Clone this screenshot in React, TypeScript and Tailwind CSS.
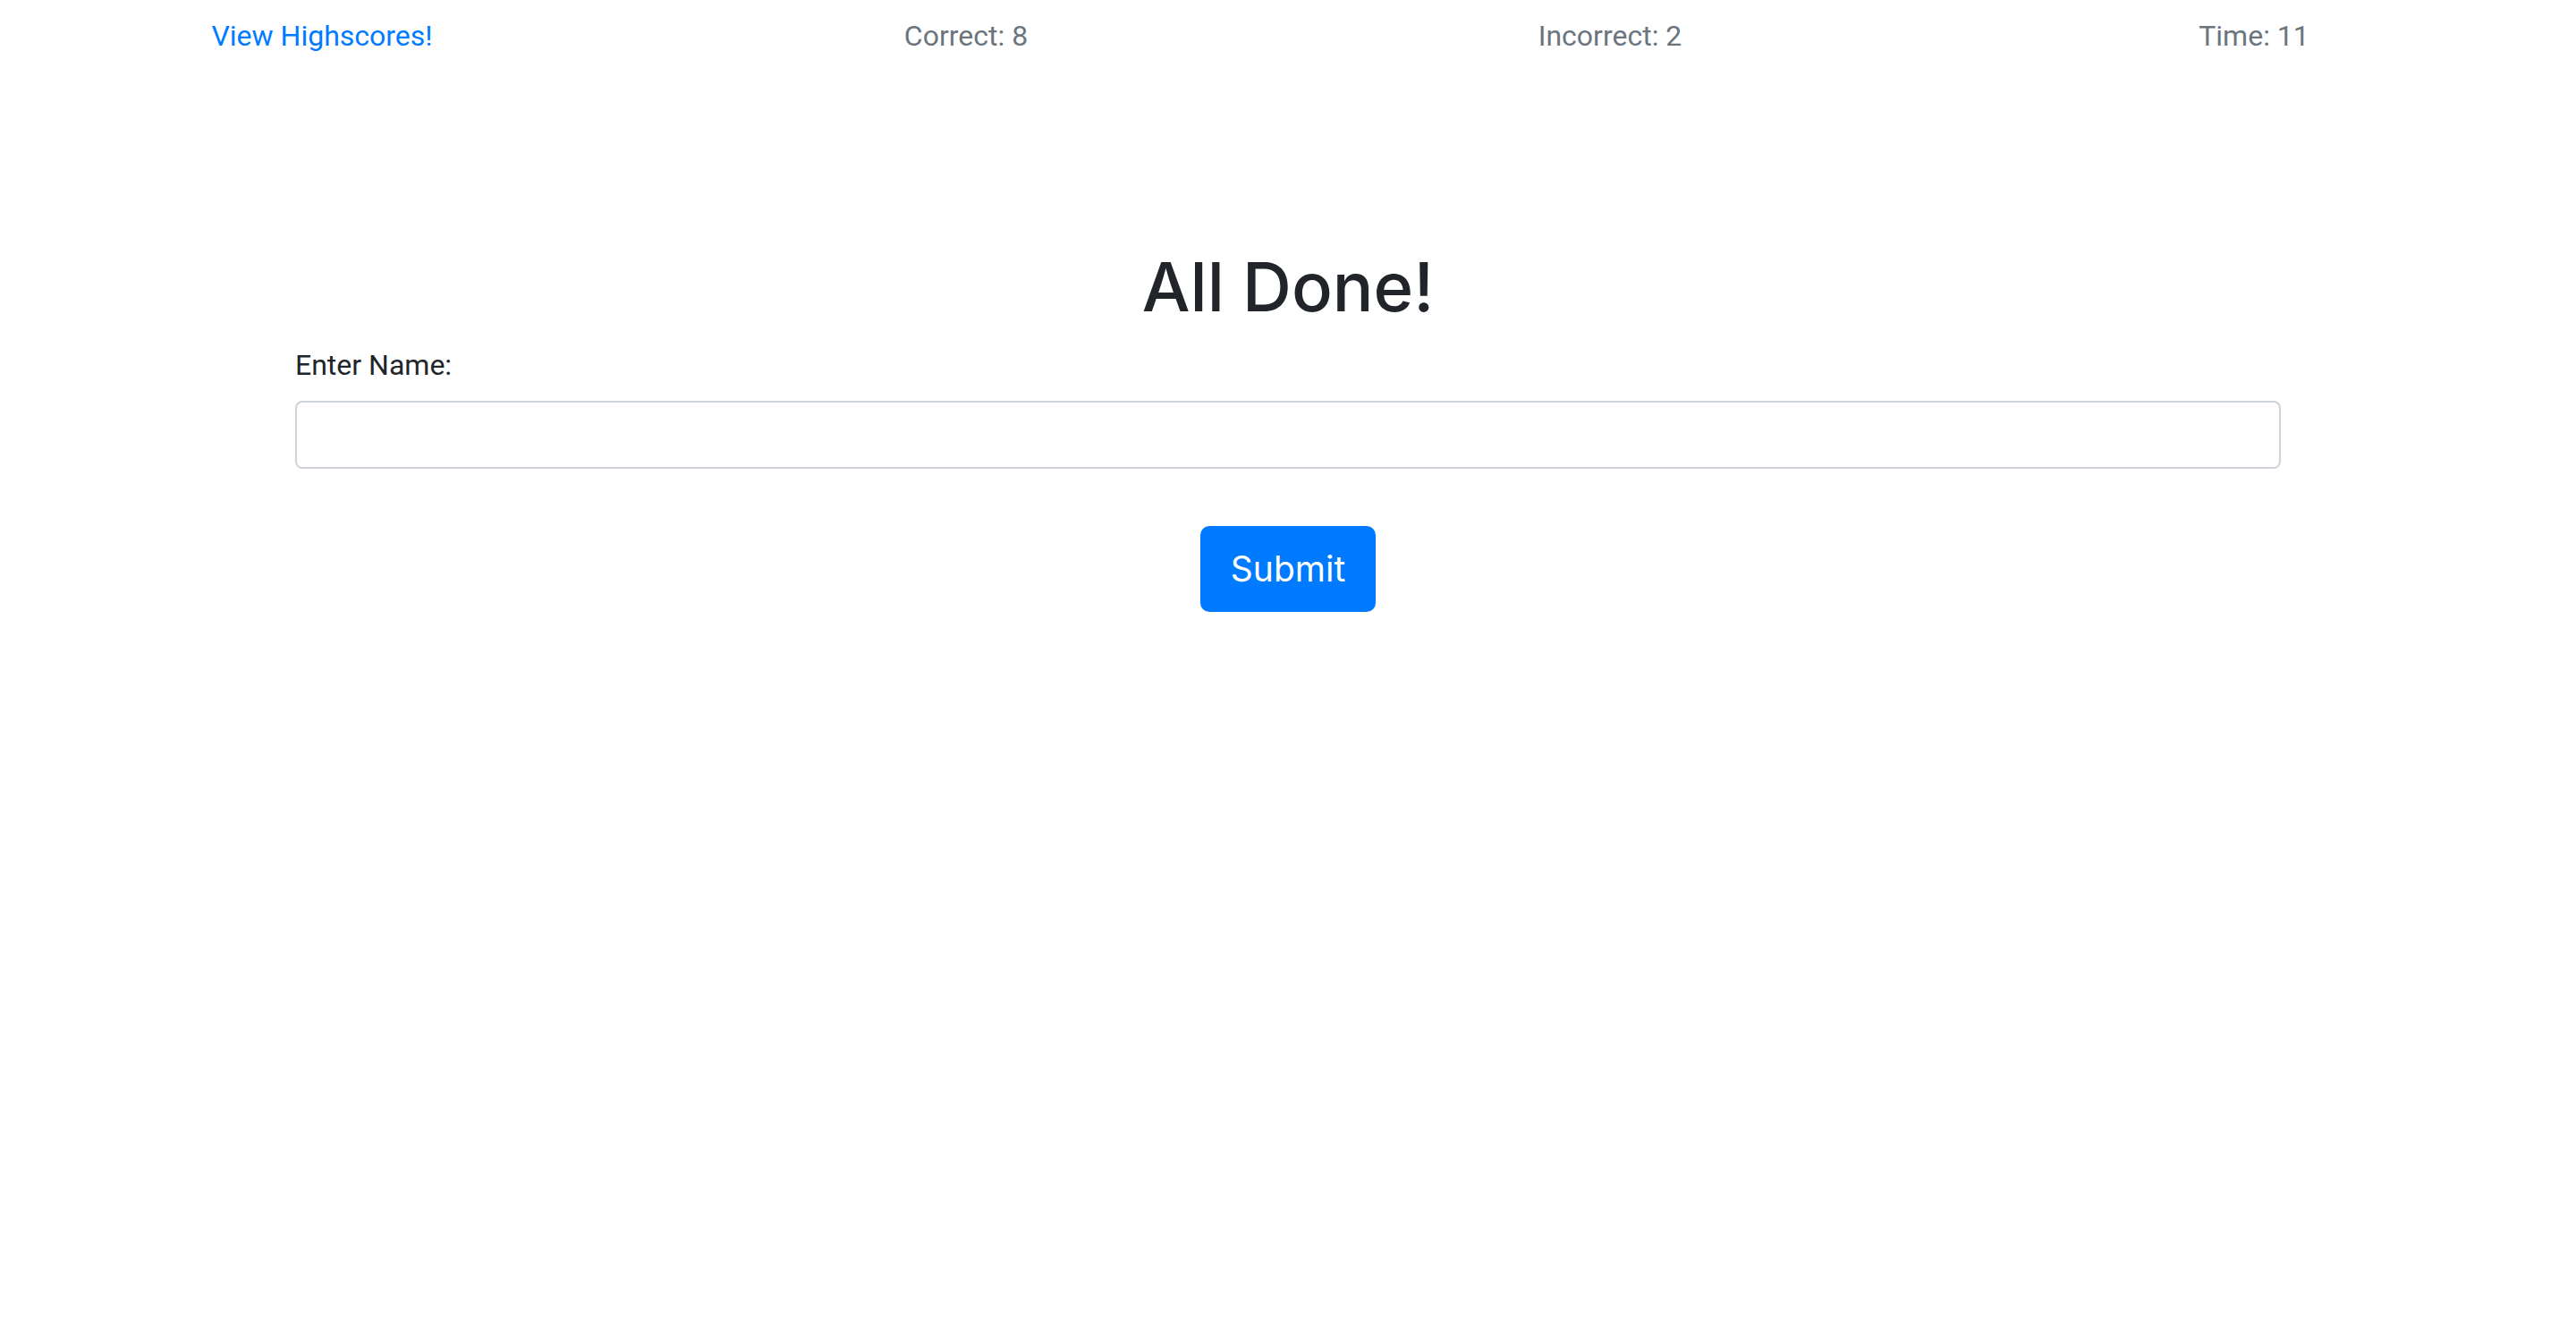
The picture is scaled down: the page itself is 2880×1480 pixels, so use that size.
import { useState } from "react";

const stats = [
  { label: "Correct", value: 8 },
  { label: "Incorrect", value: 2 },
  { label: "Time", value: 11 },
];

function StatusBar() {
  return (
    <nav className="grid grid-cols-4 text-center text-[#6c757d]">
      <a href="#highscores" className="py-4 text-[#007bff]">
        View Highscores!
      </a>
      {stats.map((stat) => (
        <p key={stat.label} className="py-4">
          {stat.label}: {stat.value}
        </p>
      ))}
    </nav>
  );
}

function NameForm() {
  const [name, setName] = useState("");
  return (
    <form className="flex flex-col" onSubmit={(event) => event.preventDefault()}>
      <label htmlFor="name" className="mb-4">
        Enter Name:
      </label>
      <input
        id="name"
        type="text"
        value={name}
        onChange={(event) => setName(event.target.value)}
        className="h-[76px] w-full rounded-lg border-2 border-[#ced4da] bg-white px-6 text-[#495057]"
      />
      <button
        type="submit"
        className="mt-16 self-center rounded-[10px] border-2 border-[#007bff] bg-[#007bff] px-8 py-4 font-['Inter',sans-serif] text-[39px] leading-[60px] text-white"
      >
        Submit
      </button>
    </form>
  );
}

export default function App() {
  return (
    <div className="min-h-screen bg-white font-['Roboto',sans-serif] text-[32px] leading-[48px] text-[#212529]">
      <StatusBar />
      <main className="mx-auto mt-48 max-w-[2280px] px-[30px]">
        <h1 className="mb-4 text-center font-['Inter',sans-serif] text-[76px] leading-[96px] font-medium">
          All Done!
        </h1>
        <NameForm />
      </main>
    </div>
  );
}
